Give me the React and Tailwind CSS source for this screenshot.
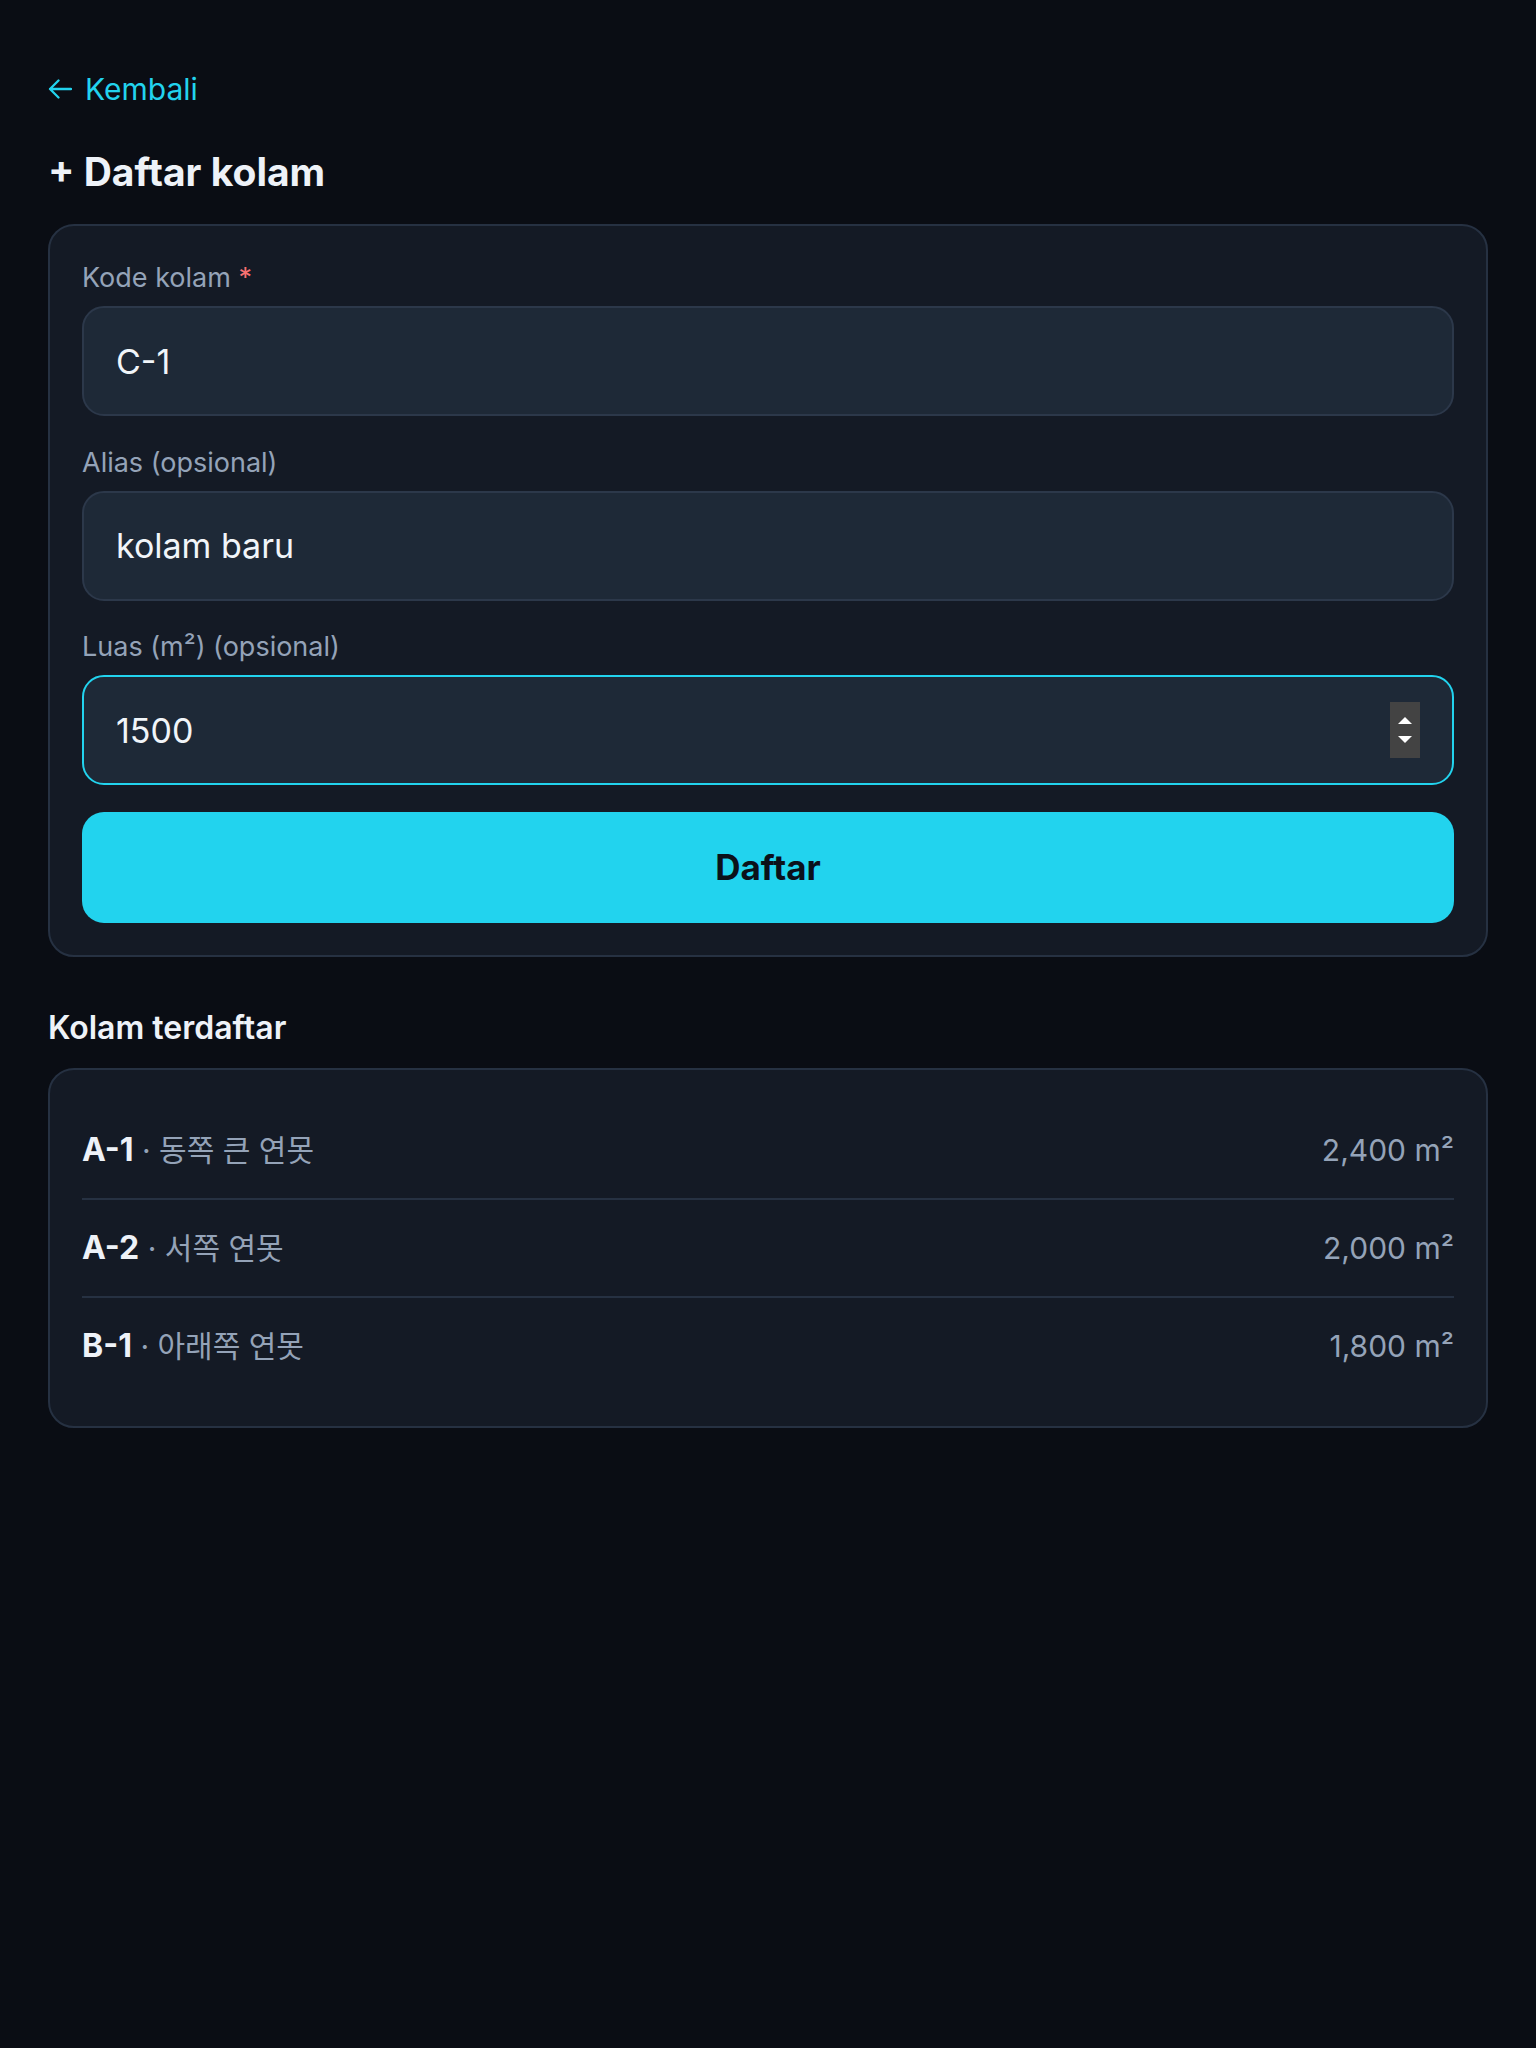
import React, { useState } from "react";

const fieldLabel = "text-[27px] leading-[40px] text-[#94a3b8]";
const fieldInput =
  "h-[110px] w-full rounded-[22px] border-2 bg-[#1e2937] px-[32px] text-[34px] text-[#f1f5f9] outline-none";

const ponds = [
  { code: "A-1", name: "동쪽 큰 연못", area: "2,400 m²" },
  { code: "A-2", name: "서쪽 연못", area: "2,000 m²" },
  { code: "B-1", name: "아래쪽 연못", area: "1,800 m²" },
];

const BackArrow = () => (
  <svg width="24" height="20" viewBox="0 0 24 20" fill="none">
    <path
      d="M23 10H2M10.5 1.5L2 10l8.5 8.5"
      stroke="currentColor"
      strokeWidth="2.3"
      strokeLinecap="round"
      strokeLinejoin="round"
    />
  </svg>
);

const Spinner = () => (
  <div className="absolute right-[34px] top-[27px] flex h-[56px] w-[30px] flex-col items-center justify-center gap-[12px] bg-[#434343]">
    <div className="h-0 w-0 border-x-[7px] border-b-[7px] border-x-transparent border-b-white" />
    <div className="h-0 w-0 border-x-[7px] border-t-[7px] border-x-transparent border-t-white" />
  </div>
);

export default function App() {
  const [form, setForm] = useState({ code: "C-1", alias: "kolam baru", area: "1500" });

  const handleChange = (e, name) => {
    setForm({ ...form, [name]: e.target.value });
  };

  return (
    <div className="min-h-screen bg-[#0a0d14] px-[48px] pt-[68px] pb-[48px] font-['Inter','Noto_Sans_CJK_KR',sans-serif]">
      <a className="flex h-[42px] items-center gap-[13px] text-[30px] text-[#22d3ee]">
        <BackArrow />
        <span>Kembali</span>
      </a>

      <h1 className="mt-[38px] text-[39px] font-bold leading-[48px] text-[#eef2f8]">
        + Daftar kolam
      </h1>

      <div className="mt-[28px] flex flex-col gap-[26.5px] rounded-[26px] border-2 border-[#263142] bg-[#141a25] p-[32px]">
        <div className="flex flex-col gap-[8px]">
          <label className={fieldLabel}>
            Kode kolam <span className="text-[#f87171]">*</span>
          </label>
          <input
            className={`${fieldInput} border-[#2c384a]`}
            value={form.code}
            onChange={(e) => handleChange(e, "code")}
          />
        </div>
        <div className="flex flex-col gap-[8px]">
          <label className={fieldLabel}>Alias (opsional)</label>
          <input
            className={`${fieldInput} border-[#2c384a]`}
            value={form.alias}
            onChange={(e) => handleChange(e, "alias")}
          />
        </div>
        <div className="flex flex-col gap-[8px]">
          <label className={fieldLabel}>Luas (m²) (opsional)</label>
          <div className="relative">
            <input
              className={`${fieldInput} border-[#22d3ee]`}
              value={form.area}
              onChange={(e) => handleChange(e, "area")}
            />
            <Spinner />
          </div>
        </div>
        <button
          type="button"
          className="h-[111px] w-full rounded-[22px] bg-[#22d3ee] text-[35px] font-bold text-[#0b111a]"
        >
          Daftar
        </button>
      </div>

      <h2 className="mt-[49.5px] text-[32px] font-semibold leading-[44px] text-[#eef2f8]">
        Kolam terdaftar
      </h2>

      <div className="mt-[18px] rounded-[26px] border-2 border-[#263142] bg-[#141a25] p-[32px]">
        {ponds.map((p, i) => (
          <div
            key={p.code}
            className={`flex items-center justify-between text-[30px] ${
              i < ponds.length - 1 ? "h-[98px] border-b-2 border-[#263142]" : "h-[96px]"
            }`}
          >
            <p>
              <span className="text-[32px] font-bold text-[#eef2f8]">{p.code}</span>
              <span className="text-[#94a3b8]"> · {p.name}</span>
            </p>
            <p className="text-[#94a3b8]">{p.area}</p>
          </div>
        ))}
      </div>
    </div>
  );
}
